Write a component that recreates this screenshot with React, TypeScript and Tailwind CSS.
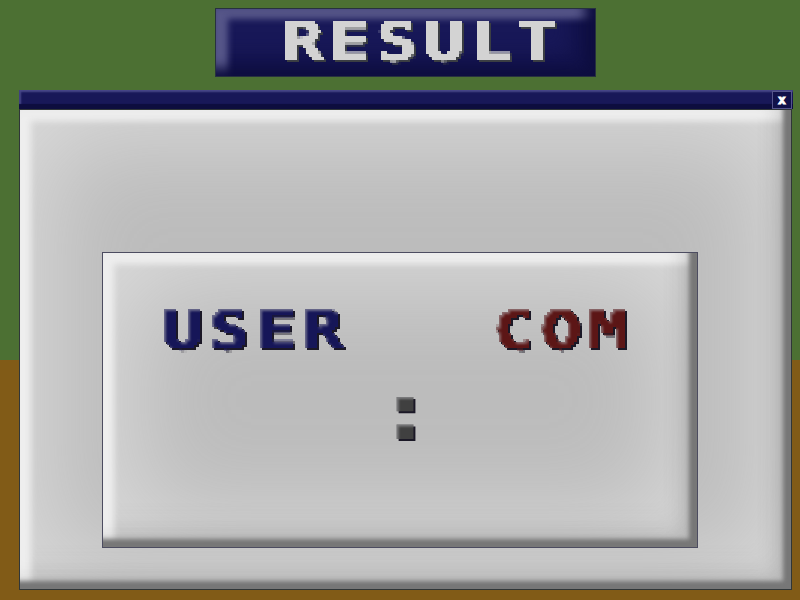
import React from "react";

const PANEL =
  "shadow-[inset_-8px_-8px_4px_#777777,inset_-16px_-10px_16px_rgba(130,130,130,0.26),inset_11px_11px_6px_#eeeeee,inset_-12px_-22px_24px_rgba(120,120,120,0.14),inset_0_0_100px_28px_#dadada] bg-[#bcbcbc]";

const GLYPHS =
  "block whitespace-pre font-bold font-['DejaVu_Sans_Mono',monospace] text-[53px] leading-[53px] tracking-[4.2px] origin-top-left scale-x-130 [-webkit-text-stroke:1.2px_currentColor]";

function Filters() {
  return (
    <svg className="absolute h-0 w-0" aria-hidden="true">
      <filter id="pixel" x="0" y="0" width="100%" height="100%">
        <feFlood x="1" y="1" width="1" height="1" floodColor="#000" />
        <feComposite width="3" height="3" />
        <feTile result="grid" />
        <feComposite in="SourceGraphic" in2="grid" operator="in" />
        <feMorphology operator="dilate" radius="1" />
        <feComponentTransfer>
          <feFuncA type="linear" slope="4" intercept="-1.5" />
        </feComponentTransfer>
      </filter>
      <filter id="bevel" x="-5%" y="-5%" width="110%" height="110%" colorInterpolationFilters="sRGB">
        <feOffset in="SourceAlpha" dx="2" dy="2" result="moved" />
        <feGaussianBlur in="moved" stdDeviation="0.8" result="soft" />
        <feFlood floodColor="#b0b0b4" floodOpacity="0.55" />
        <feComposite in2="SourceAlpha" operator="in" />
        <feComposite in2="soft" operator="out" result="rim" />
        <feFlood floodColor="#1b1826" />
        <feComposite in2="moved" operator="in" result="shade" />
        <feMerge result="all">
          <feMergeNode in="shade" />
          <feMergeNode in="SourceGraphic" />
          <feMergeNode in="rim" />
        </feMerge>
        <feGaussianBlur in="all" stdDeviation="0.4" />
      </filter>
    </svg>
  );
}

function Word({ text, className, shade }: { text: string; className: string; shade: string }) {
  return (
    <div className={shade}>
      <div className="[filter:url(#pixel)]">
        <span className={`${GLYPHS} ${className}`}>{text}</span>
      </div>
    </div>
  );
}

export default function App() {
  return (
    <main className="relative h-[600px] w-[800px] overflow-hidden bg-[linear-gradient(#4c7033_360px,#815b17_360px)] pt-2">
      <Filters />
      <h1 className="ml-[215px] h-[69px] w-[381px] border border-[#27313f] bg-[#181858] pl-[66px] pt-1.5 shadow-[inset_-10px_-8px_12px_#0e0e40,inset_12px_10px_6px_#565689,inset_-24px_-20px_20px_#12124a]">
        <Word
          text="RESULT"
          className="text-[#d3d3d3]"
          shade="w-[290px] drop-shadow-[2px_2px_0.5px_#3b3e43]"
        />
      </h1>

      <section className="ml-[19px] mt-[13px] w-[774px]">
        <header className="flex h-[19px] justify-end bg-[#181858] pr-px pt-px shadow-[inset_0_-5px_1px_#0d0d3e,inset_2px_2px_2px_#48488a]">
          <button className="flex h-[18px] w-5 items-center justify-center border border-[#55558c] bg-[#11114a]">
            <span className="block font-['DejaVu_Sans_Mono',monospace] text-[13px] font-bold leading-[14px] text-white [-webkit-text-stroke:1px_white]">
              x
            </span>
          </button>
        </header>
        <div className={`h-[481px] w-[773px] border border-[#303638] pl-[82px] pt-[142px] ${PANEL}`}>
          <div className={`h-[296px] w-[596px] border border-[#4c4c60] pt-[50px] ${PANEL}`}>
            <div className="flex">
              <div className="w-[331px] pl-[58px]">
                <Word text="USER" className="text-[#191959]" shade="w-[195px] [filter:url(#bevel)]" />
              </div>
              <div className="pl-[59px]">
                <Word text="COM" className="text-[#5c1919]" shade="w-[150px] [filter:url(#bevel)]" />
              </div>
            </div>
            <div className="pl-[271px] pt-4">
              <div className="h-[80px] w-[70px] [filter:url(#bevel)]">
                <span className="block w-[48px] origin-top-left scale-x-[1.29] font-['DejaVu_Sans_Mono',monospace] text-[80px] font-bold leading-[80px] text-[#404040]">
                  :
                </span>
              </div>
            </div>
          </div>
        </div>
      </section>
    </main>
  );
}
